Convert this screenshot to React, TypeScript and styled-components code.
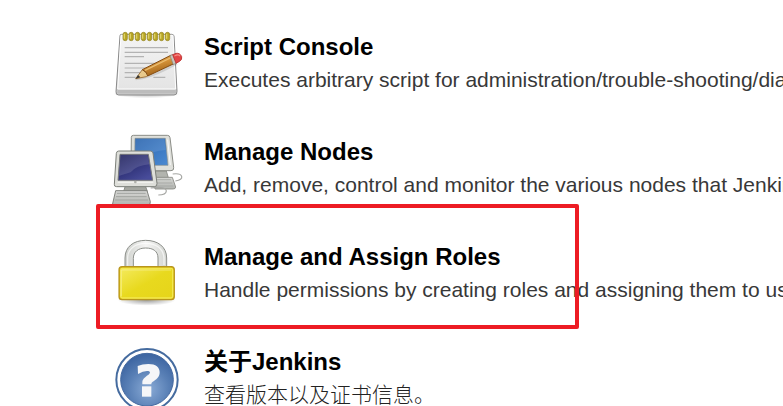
import React from 'react';
import styled, { createGlobalStyle } from 'styled-components';

const GlobalStyle = createGlobalStyle`
  body { margin: 0; background: #fff; overflow: hidden; }
`;

const Page = styled.main`
  position: relative;
  box-sizing: border-box;
  width: 783px;
  height: 406px;
  padding: 20px 0 0 105px;
  overflow: hidden;
  background: #fff;
  font-family: "Liberation Sans", Arial, "Noto Sans CJK SC", sans-serif;
`;

const Row = styled.a`
  display: flex;
  gap: 9px;
  height: 105px;
`;

const Icon = styled.svg`
  flex: none;
  width: 90px;
  height: 90px;
`;

const Texts = styled.div`
  flex: none;
  padding-top: 11px;
  white-space: nowrap;
`;

const Title = styled.div`
  height: 33px;
  line-height: 32px;
  font-size: 24px;
  font-weight: 700;
  color: #000;
`;

const Description = styled.div<{ $light?: boolean }>`
  height: 33px;
  line-height: 32px;
  font-size: 21px;
  font-weight: ${(p) => (p.$light ? 300 : 400)};
  color: ${(p) => (p.$light ? '#222' : '#383838')};
`;

const Highlight = styled.div`
  position: absolute;
  left: 96px;
  top: 204px;
  box-sizing: border-box;
  width: 483px;
  height: 125px;
  border: 4px solid #ed1c24;
  border-radius: 2px;
`;

const NotepadIcon = () => (
  <Icon viewBox="0 0 270 270">
    <defs>
      <linearGradient id="paper" x1="0" y1="0" x2="0" y2="1">
        <stop offset="0" stopColor="#f4f4f4" />
        <stop offset="1" stopColor="#e4e4e4" />
      </linearGradient>
      <linearGradient id="wood" x1="0" y1="0" x2=".4" y2="1">
        <stop offset="0" stopColor="#e9b765" />
        <stop offset=".5" stopColor="#d39138" />
        <stop offset="1" stopColor="#9c5f17" />
      </linearGradient>
      <radialGradient id="padShadow">
        <stop offset="0" stopColor="#000" stopOpacity=".28" />
        <stop offset="1" stopColor="#000" stopOpacity="0" />
      </radialGradient>
    </defs>
    <ellipse cx="125" cy="222" rx="100" ry="13" fill="url(#padShadow)" />
    <path d="M45 47Q45 43 50 43H200Q206 43 207 48L216 214Q217 225 207 225H41Q32 225 33 215Z" fill="#c9c9c9" stroke="#8b8b8b" strokeWidth="3" />
    <path d="M48 46H204L212 207H38Z" fill="url(#paper)" stroke="#fff" strokeWidth="3" />
    <path d="M38 210H212L213 220H37Z" fill="#bcbcbc" />
    <g stroke="#b3b3b3" strokeWidth="3.5">
      <path d="M59 83H189M59 97H189M59 110H117M59 130H168M59 144H150M59 158H110M59 172H92M145 172H181" />
    </g>
    {[60, 78, 97, 115, 133, 151, 169, 187].map((x) => (
      <g key={x}>
        <rect x={x - 6} y="37" width="13" height="25" rx="6" fill="#b8a625" stroke="#8f801c" strokeWidth="2" />
        <path d={`M${x - 2} 41V56`} stroke="#ded164" strokeWidth="4" />
      </g>
    ))}
    <path d="M92 177Q130 174 181 148L216 130" stroke="#555" strokeOpacity=".18" strokeWidth="8" fill="none" />
    <path d="M92 176L112 149L132 164L124 170Z" fill="#e8c98b" stroke="#94662c" strokeWidth="2.5" />
    <path d="M92 176L99 165L106 172Z" fill="#343434" />
    <path d="M112 149L199 105L211 129L128 168Q126 155 112 149Z" fill="url(#wood)" stroke="#854d12" strokeWidth="3" />
    <path d="M120 151L202 111" stroke="#eabd71" strokeWidth="4" />
    <path d="M195 107L204 103L215 129L205 134Z" fill="#c6c6bd" stroke="#858177" strokeWidth="2" />
    <path d="M203 104L213 100Q225 98 230 110Q233 119 222 125L213 130Z" fill="#e34545" stroke="#b83030" strokeWidth="2.5" />
    <path d="M208 108L216 105Q222 104 225 108" stroke="#f58b83" strokeWidth="4" fill="none" />
  </Icon>
);

const ComputersIcon = () => (
  <Icon viewBox="0 0 270 270">
    <defs>
      <linearGradient id="screenBack" x1="0" y1="0" x2="1" y2="1">
        <stop offset="0" stopColor="#2863ae" />
        <stop offset="1" stopColor="#4b8ad2" />
      </linearGradient>
      <linearGradient id="screenFront" x1="0" y1="0" x2=".7" y2="1">
        <stop offset="0" stopColor="#171956" />
        <stop offset="1" stopColor="#484c9a" />
      </linearGradient>
      <linearGradient id="keys" x1="0" y1="0" x2="0" y2="1">
        <stop offset="0" stopColor="#d6d7d4" />
        <stop offset="1" stopColor="#b2b4b0" />
      </linearGradient>
    </defs>
    <path d="M203 147Q227 144 230 154T211 168" fill="none" stroke="#a5a6a3" strokeWidth="3.5" />
    <path d="M123 138H184L190 158H120Z" fill="#b2b4ae" stroke="#83857f" strokeWidth="2.5" />
    <path d="M85 31H187Q194 31 195 38L206 128Q207 137 198 137H85Q78 137 78 130L79 37Q79 31 85 31Z" fill="#dedfda" stroke="#8b8d87" strokeWidth="3" />
    <path d="M90 40H181L189 121H89Z" fill="url(#screenBack)" stroke="#8b928f" strokeWidth="2" />
    <path d="M91 42H178L182 75Q140 78 128 94L90 113Z" fill="#fff" fillOpacity=".1" />
    <path d="M188 44L196 120" stroke="#fafafa" strokeWidth="3" />
    <path d="M144 157H202L212 186Q212 192 204 192H150Z" fill="url(#keys)" stroke="#858781" strokeWidth="2.5" />
    <path d="M151 164H198M153 174H202M153 183H205" stroke="#a4a6a2" strokeWidth="2.5" />
    <path d="M137 189Q183 183 184 198Q183 210 160 210" fill="none" stroke="#a5a6a3" strokeWidth="3.5" />
    <path d="M61 182H121L127 199H56Z" fill="#a5a7a1" stroke="#7d807a" strokeWidth="2.5" />
    <path d="M41 78H136Q143 78 144 84L156 175Q157 185 148 185H35Q27 185 28 178L34 85Q35 78 41 78Z" fill="#dedfda" stroke="#7b7e78" strokeWidth="3" />
    <path d="M45 88H130L143 166H39Z" fill="url(#screenFront)" stroke="#77797b" strokeWidth="3" />
    <path d="M46 90H128L133 118Q94 121 77 142L41 153Z" fill="#fff" fillOpacity=".13" />
    <path d="M38 172H145" stroke="#f5f5f2" strokeWidth="3" />
    <circle cx="91" cy="171" r="4" fill="#afb0aa" />
    <path d="M32 197H126L136 230Q137 240 128 240H22Z" fill="url(#keys)" stroke="#81837e" strokeWidth="3" />
    <path d="M36 205H122M33 215H125M30 225H129" stroke="#a2a4a0" strokeWidth="3" />
  </Icon>
);

const LockIcon = () => (
  <Icon viewBox="0 0 270 270">
    <defs>
      <linearGradient id="brass" x1="0" y1="0" x2="1" y2="1">
        <stop offset="0" stopColor="#f4ea5c" />
        <stop offset=".5" stopColor="#e8d91e" />
        <stop offset="1" stopColor="#e6d41a" />
      </linearGradient>
      <linearGradient id="shackle" x1="0" y1="0" x2="1" y2="0">
        <stop offset="0" stopColor="#cfd1cd" />
        <stop offset=".5" stopColor="#f5f5f4" />
        <stop offset="1" stopColor="#d3d5d1" />
      </linearGradient>
      <radialGradient id="lockShadow">
        <stop offset="0" stopColor="#000" stopOpacity=".4" />
        <stop offset="1" stopColor="#000" stopOpacity="0" />
      </radialGradient>
    </defs>
    <ellipse cx="125" cy="210" rx="87" ry="17" fill="url(#lockShadow)" />
    <path d="M60 114V84C60 50 86 31 122 31S185 50 185 84V114H159V84C159 64 145 54 122 54S85 66 85 85V114Z" fill="url(#shackle)" stroke="#8c8f8a" strokeWidth="3" />
    <path d="M68 107V84C68 56 91 40 122 40S175 55 177 84V105" fill="none" stroke="#fff" strokeOpacity=".65" strokeWidth="4" />
    <rect x="42" y="110" width="166" height="99" rx="9" fill="#d5b912" stroke="#b8941c" strokeWidth="3.5" />
    <rect x="47" y="115" width="156" height="89" rx="5" fill="url(#brass)" stroke="#f3e74f" strokeWidth="4" />
    <path d="M49 199V120H198" fill="none" stroke="#faf3a0" strokeOpacity=".6" strokeWidth="3" />
  </Icon>
);

const HelpIcon = () => (
  <Icon viewBox="0 0 270 270">
    <defs>
      <radialGradient id="helpBlue" cx=".53" cy=".68" r=".65">
        <stop offset="0" stopColor="#8aabd6" />
        <stop offset=".6" stopColor="#587fb5" />
        <stop offset="1" stopColor="#3e66a2" />
      </radialGradient>
    </defs>
    <circle cx="126" cy="134" r="92" fill="#fff" stroke="#456b9f" strokeWidth="6" />
    <circle cx="126" cy="134" r="79" fill="url(#helpBlue)" stroke="#4469a0" strokeWidth="3" />
    <path d="M98 93Q112 87 130 87C153 87 164 97 164 112C164 124 157 131 147 138C141 142 139 143 139 148H112V143C112 133 119 128 128 121C139 113 136 108 126 108Q114 108 99 117Z" fill="#f5f6f8" />
    <rect x="111" y="154" width="28" height="31" fill="#f5f6f8" />
  </Icon>
);

const items = [
  { icon: NotepadIcon, title: 'Script Console', text: 'Executes arbitrary script for administration/trouble-shooting/diagnostics.' },
  { icon: ComputersIcon, title: 'Manage Nodes', text: 'Add, remove, control and monitor the various nodes that Jenkins runs jobs on.' },
  { icon: LockIcon, title: 'Manage and Assign Roles', text: 'Handle permissions by creating roles and assigning them to users/groups' },
  { icon: HelpIcon, title: '关于Jenkins', text: '查看版本以及证书信息。', light: true },
];

export default function App() {
  return (
    <>
      <GlobalStyle />
      <Page>
        {items.map(({ icon: ItemIcon, title, text, light }) => (
          <Row key={title}>
            <ItemIcon />
            <Texts>
              <Title>{title}</Title>
              <Description $light={light}>{text}</Description>
            </Texts>
          </Row>
        ))}
        <Highlight />
      </Page>
    </>
  );
}
